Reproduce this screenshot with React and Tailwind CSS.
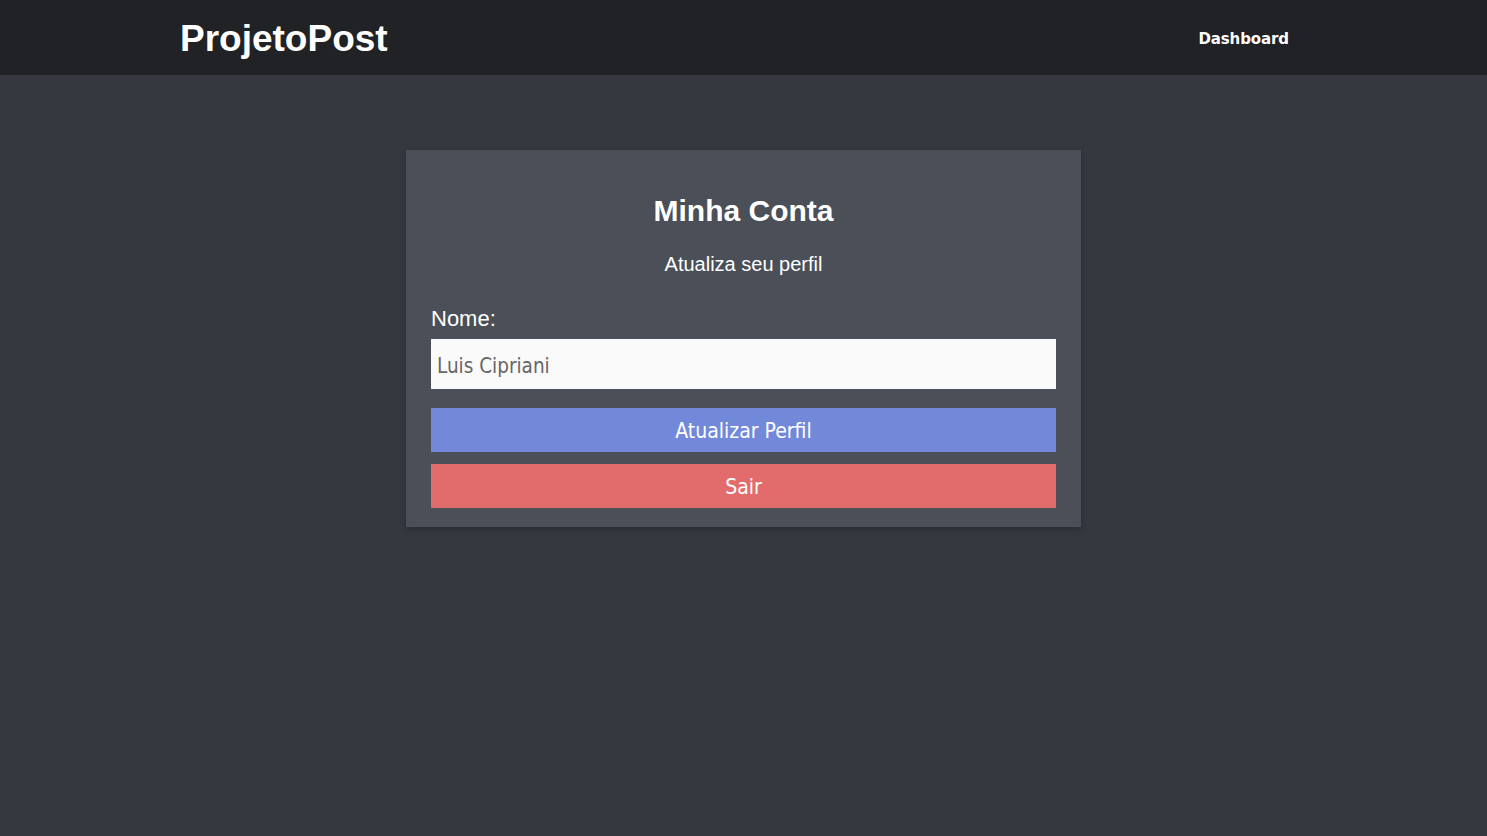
import React from 'react';

export default function App() {
  return (
    <div className="min-h-screen bg-[#363840] font-['Liberation_Sans',Arial,sans-serif]">
      <header className="h-[75px] bg-[#212226]">
        <div className="mx-auto w-[1127px] h-full flex items-center justify-between">
          <h1 className="pt-[2px] text-[37px] font-bold text-white leading-none">ProjetoPost</h1>
          <a className="pt-[4px] pr-[18px] text-[15px] font-bold text-white font-['DejaVu_Sans',Verdana,sans-serif] tracking-[-0.1px]">
            Dashboard
          </a>
        </div>
      </header>

      <div className="flex justify-center pt-[75px]">
        <div className="w-[675px] bg-[#4b4f58] px-[25px] pt-[46px] pb-[19px] shadow-[0_2px_6px_rgba(0,0,0,0.25)]">
          <h2 className="text-center text-[30px] font-bold text-white leading-none">Minha Conta</h2>
          <p className="mt-[28px] text-center text-[20px] text-white leading-none">Atualiza seu perfil</p>

          <label className="block mt-[34px] text-[22px] text-white leading-none">Nome:</label>
          <input
            type="text"
            defaultValue="Luis Cipriani"
            className="mt-[9px] block w-full h-[50px] bg-[#fafafa] px-[6px] pt-[3px] text-[20.5px] text-[#666] outline-none font-['DejaVu_Sans_Condensed','DejaVu_Sans',sans-serif]"
          />

          <button className="mt-[19px] block w-full h-[44px] pt-[3px] bg-[#7289da] text-white text-[21px] font-['DejaVu_Sans_Condensed','DejaVu_Sans',sans-serif]">
            Atualizar Perfil
          </button>
          <button className="mt-[12px] block w-full h-[44px] pt-[3px] bg-[#e26b6b] text-white text-[21px] font-['DejaVu_Sans_Condensed','DejaVu_Sans',sans-serif]">
            Sair
          </button>
        </div>
      </div>
    </div>
  );
}
